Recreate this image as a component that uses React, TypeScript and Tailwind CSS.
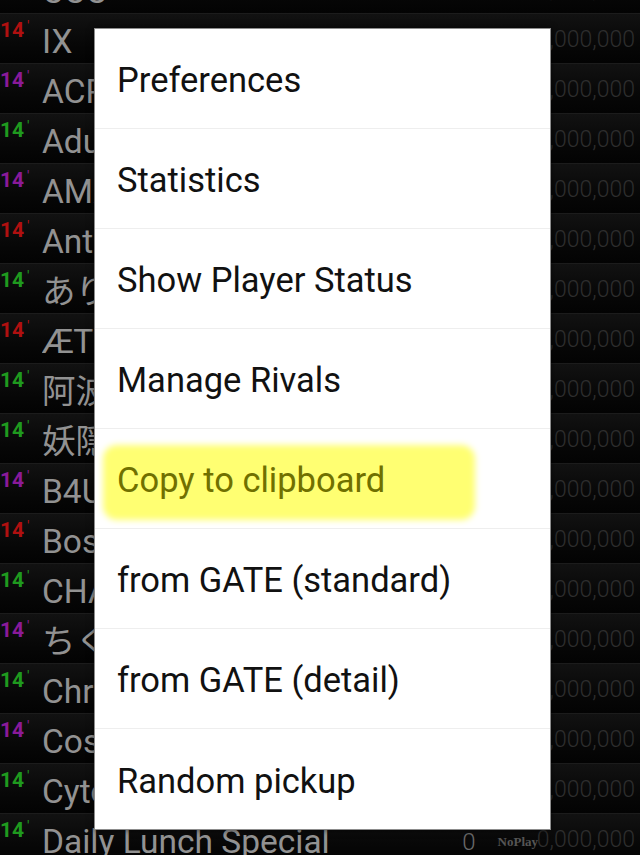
import React from "react";

type Row = { title: string; lv: "red" | "purple" | "green" };

const rows: Row[] = [
  { title: "CCC", lv: "green" },
  { title: "IX", lv: "red" },
  { title: "ACROSS WORLD", lv: "purple" },
  { title: "Adularia", lv: "green" },
  { title: "AMAZING MIGHTYYYY!!!!", lv: "purple" },
  { title: "Anti-Matter", lv: "red" },
  { title: "ありえないくらい奇跡", lv: "green" },
  { title: "ÆTHER", lv: "red" },
  { title: "阿波おどり", lv: "green" },
  { title: "妖隠し", lv: "green" },
  { title: "B4U", lv: "purple" },
  { title: "Boss Rush", lv: "red" },
  { title: "CHAOS", lv: "green" },
  { title: "ちくわパフェだよ☆CKP", lv: "purple" },
  { title: "Chrono Diver", lv: "green" },
  { title: "Cosmic Cat", lv: "purple" },
  { title: "Cytokinesis", lv: "green" },
  { title: "Daily Lunch Special", lv: "green" },
];

const lvColor = {
  red: "text-[#b01010]",
  purple: "text-[#8a1a9a]",
  green: "text-[#1f9a1f]",
};

const menu = [
  "Preferences",
  "Statistics",
  "Show Player Status",
  "Manage Rivals",
  "Copy to clipboard",
  "from GATE (standard)",
  "from GATE (detail)",
  "Random pickup",
];

function SongRow({ row, last }: { row: Row; last: boolean }) {
  return (
    <div className="relative flex h-[50px] shrink-0 border-t border-[#1c1c1c] bg-gradient-to-b from-[#121212] to-[#030303]">
      <div className={`w-[42px] shrink-0 pt-[6px] text-[21px] font-bold leading-none ${lvColor[row.lv]}`}>
        14<span className="relative -top-[6px] ml-[3px] text-[14px] font-normal">'</span>
      </div>
      <div className="flex-1 overflow-hidden whitespace-nowrap pt-[11px] text-[33.5px] leading-none text-[#929292] [font-family:Roboto,'Noto_Sans_CJK_JP',sans-serif]">
        {row.title}
      </div>
      {last && (
        <div className="flex items-center gap-[22px] pt-[6px] pr-[14px]">
          <span className="text-[24px] font-light text-[#6a6a6a]">0</span>
          <span className="text-[13px] font-bold text-[#555] [font-family:'Liberation_Serif',serif]">NoPlay</span>
        </div>
      )}
      <div className="flex w-[88px] shrink-0 items-start justify-end pt-[9px] pr-[5px] text-[23px] font-light text-[#2e2e2e]">
        0,000,000
      </div>
    </div>
  );
}

export default function App() {
  return (
    <div className="relative h-[855px] w-[640px] overflow-hidden bg-black [font-family:Roboto,sans-serif]">
      <div className="-mt-[37px] flex flex-col">
        {rows.map((r, i) => (
          <SongRow key={i} row={r} last={i === rows.length - 1} />
        ))}
      </div>

      <div className="absolute left-[94px] top-[28px] w-[457px] border border-[#8c8c8c] bg-white shadow-[0_0_6px_rgba(0,0,0,0.6)]">
        {menu.map((m, i) => {
          const hl = m === "Copy to clipboard";
          return (
            <div
              key={m}
              className={`relative flex h-[100px] items-center pt-[4px] pl-[22px] ${i < menu.length - 1 ? "border-b border-[#eeeeee]" : ""}`}
            >
              {hl && (
                <div className="absolute left-[8px] top-[16px] h-[75px] w-[372px] rounded-[14px] bg-[#ffff72] blur-[3px]" />
              )}
              <span className={`relative text-[34.5px] leading-none ${hl ? "text-[#707000]" : "text-[#111]"}`}>{m}</span>
            </div>
          );
        })}
      </div>
    </div>
  );
}
